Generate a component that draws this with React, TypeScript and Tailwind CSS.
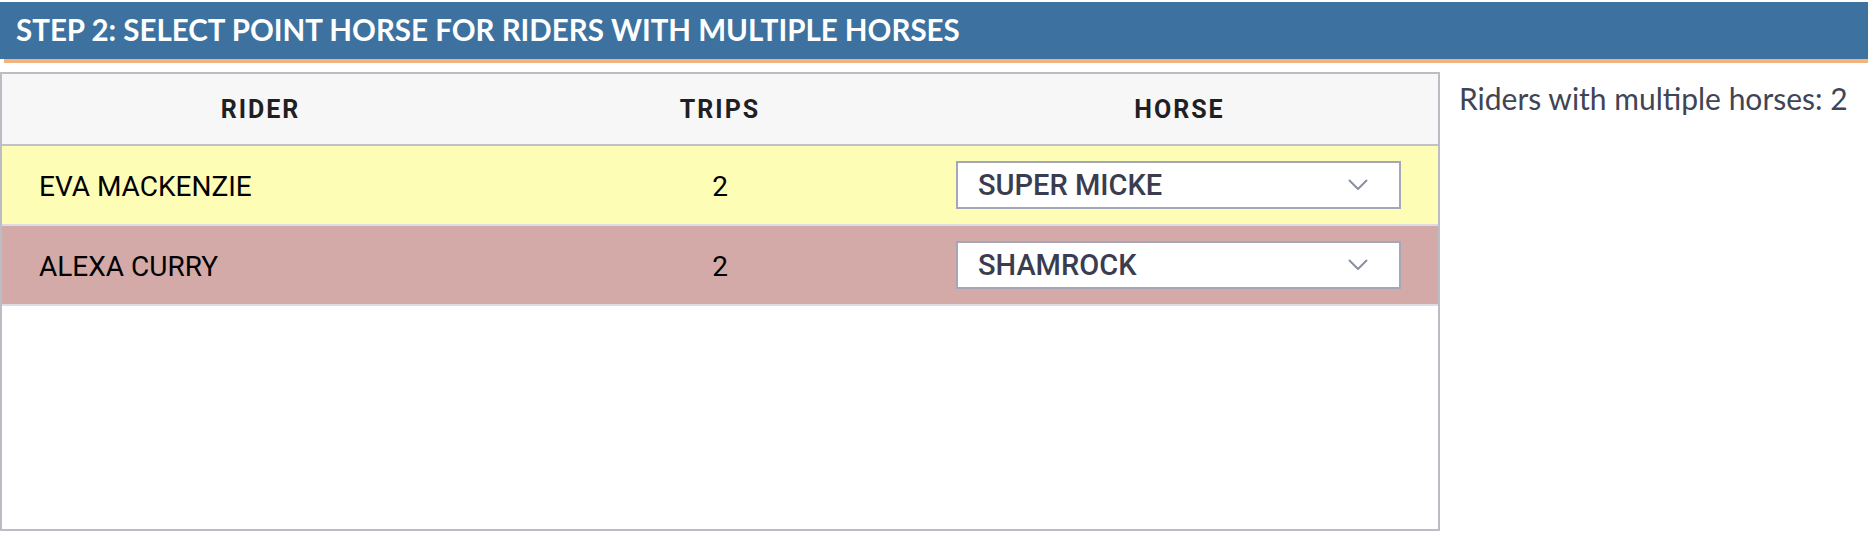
import React from "react";

interface RiderRow {
  name: string;
  trips: number;
  horse: string;
  bg: string;
}

const rows: RiderRow[] = [
  { name: "EVA MACKENZIE", trips: 2, horse: "SUPER MICKE", bg: "bg-[#fdfdb6]" },
  { name: "ALEXA CURRY", trips: 2, horse: "SHAMROCK", bg: "bg-[#d4aaa8]" },
];

const Chevron = () => (
  <svg width="20" height="12" viewBox="0 0 20 12" fill="none" className="shrink-0">
    <path d="M1.5 1.5 L10 10 L18.5 1.5" stroke="#8c8fa1" strokeWidth="2" strokeLinecap="round" strokeLinejoin="round" />
  </svg>
);

const HorseSelect = ({ value }: { value: string }) => (
  <div className="flex h-[48px] w-[445px] items-center justify-between border-2 border-[#a3a7b7] bg-white pl-[20px] pr-[31px]">
    <span className="pt-[2px] text-[29px] font-medium text-[#3a3c50]">{value}</span>
    <Chevron />
  </div>
);

const App = () => {
  return (
    <div className="h-[544px] w-[1868px] bg-white pt-[2px]" style={{ fontFamily: "Roboto, sans-serif" }}>
      <div
        className="flex h-[57px] items-center bg-[#3d72a0] pl-[16px] text-[29.5px] font-bold text-white"
        style={{ fontFamily: "Lato, sans-serif" }}
      >
        STEP 2: SELECT POINT HORSE FOR RIDERS WITH MULTIPLE HORSES
      </div>
      <div className="ml-[4px] h-[4px] bg-[#f2b47c]" />

      <div className="mt-[9px] flex">
        <div className="flex h-[459px] w-[1440px] shrink-0 flex-col border-2 border-[#babdc4]">
          <div className="grid h-[72px] grid-cols-[517px_402px_1fr] items-center border-b-2 border-[#bfc2c8] bg-[#f7f7f7] text-[25px] font-bold tracking-[0.08em] text-[#1e2024]">
            <div className="pt-[2px] text-center">RIDER</div>
            <div className="pt-[2px] text-center">TRIPS</div>
            <div className="pt-[2px] text-center">HORSE</div>
          </div>
          {rows.map((row) => (
            <div
              key={row.name}
              className={`grid h-[80px] grid-cols-[517px_402px_1fr] items-center border-b-2 border-[#dcdde4] ${row.bg} text-[28px] text-black`}
            >
              <div className="pl-[37px] pt-[4px]">{row.name}</div>
              <div className="pt-[4px] text-center">{row.trips}</div>
              <div className="pl-[35px]">
                <HorseSelect value={row.horse} />
              </div>
            </div>
          ))}
          <div className="flex-1 bg-white" />
        </div>

        <div
          className="pl-[19px] pt-[8px] text-[30px] leading-[1.2] whitespace-nowrap text-[#414455]"
          style={{ fontFamily: "Lato, sans-serif" }}
        >
          Riders with multiple horses: 2
        </div>
      </div>
    </div>
  );
};

export default App;
